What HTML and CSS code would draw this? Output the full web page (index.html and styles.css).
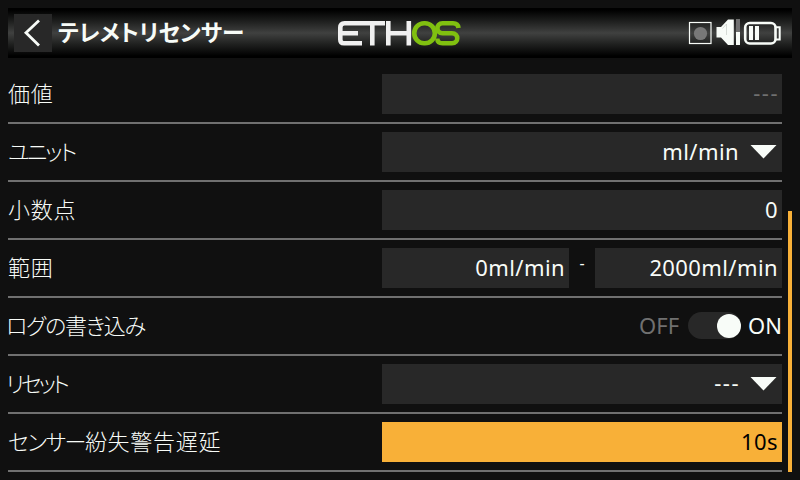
FILE: index.html
```html
<!DOCTYPE html>
<html lang="ja">
<head>
<meta charset="utf-8">
<title>テレメトリセンサー</title>
<link rel="stylesheet" href="styles.css">
</head>
<body>
<div class="screen">
  <header class="topbar">
    <button class="back" aria-label="戻る">
      <svg width="38" height="38" viewBox="0 0 38 38"><path d="M25 6.500 12 18.800 25 31.500" fill="none" stroke="#f8fcf8" stroke-width="2.800"/></svg>
    </button>
    <h1 class="title">テレメトリセンサー</h1>
    <svg class="logo" width="124" height="28" viewBox="0 0 124 28" fill="none" stroke-width="4.600">
      <g stroke="#f0f0f0">
        <path d="M25 3.300H7.500Q3.300 3.300 3.300 7.500V19.500Q3.300 23.300 7 23.300H25M3.300 13.300H21"/>
        <path d="M25 3.300H48M35.300 3.300V25.600"/>
        <path d="M51.300 1V25.600M71.800 1V25.600M51.300 13.300H71.800"/>
      </g>
      <g stroke="#80c010">
        <rect x="77.300" y="3.300" width="20.500" height="20" rx="9.800"/>
        <path d="M121.500 8Q121 3.300 116 3.300H105.500C98.800 3.300 98.800 13.300 105.500 13.300H115C122 13.300 122 23.300 115 23.300H105.500Q100.500 23.300 100.300 18.500"/>
      </g>
    </svg>
    <div class="status">
      <svg width="94" height="28" viewBox="0 0 94 28">
        <rect x="1.500" y="3.500" width="21.500" height="21" fill="none" stroke="#f8fcf8" stroke-width="1.200"/>
        <circle cx="12.500" cy="14.500" r="6.600" fill="#787878"/>
        <path d="M28.500 8H33L40 .500H45.800V26H40L33 18.500H28.500Z" fill="#f8fcf8"/>
        <path d="M34.500 9.500 38.500 5V16" fill="none" stroke="#c0c4c0" stroke-width=".6"/>
        <rect x="48" y="0" width="4" height="13" fill="#707070"/>
        <rect x="48" y="13" width="4" height="13" fill="#f8fcf8"/>
        <rect x="57.200" y="4" width="30.300" height="20.500" rx="4.500" fill="none" stroke="#f8fcf8" stroke-width="2.600"/>
        <path d="M88 8.300H91.700V20.500H88" fill="none" stroke="#f8fcf8" stroke-width="2"/>
        <path d="M61 7H65V21H61ZM67 7H71V21H67Z" fill="#f8fcf8"/>
      </svg>
    </div>
  </header>

  <main class="form">
    <div class="row"><span class="label">価値</span><div class="field muted"><span class="text empty">---</span></div></div>
    <div class="row"><span class="label unit">ユニット</span><div class="field"><span class="text">ml/min</span><i class="arrow"></i></div></div>
    <div class="row"><span class="label">小数点</span><div class="field"><span class="text">0</span></div></div>
    <div class="row"><span class="label">範囲</span>
      <div class="range"><div class="field"><span class="text">0ml/min</span></div><span class="dash">-</span><div class="field"><span class="text">2000ml/min</span></div></div>
    </div>
    <div class="row"><span class="label log">ログの書き込み</span>
      <div class="switch"><span class="text off">OFF</span><span class="track"><i class="knob"></i></span><span class="text on">ON</span></div>
    </div>
    <div class="row"><span class="label reset">リセット</span><div class="field"><span class="text empty">---</span><i class="arrow"></i></div></div>
    <div class="row"><span class="label"><span class="kana">センサー</span>紛失警告遅延</span><div class="field active"><span class="text">10s</span></div></div>
  </main>
  <div class="scrollbar"></div>
</div>
</body>
</html>
```

FILE: styles.css
```css
* { box-sizing: border-box; }

body {
  margin: 0;
  background: #101010;
  color: #f8fcf8;
  font: 22px/40px "Noto Sans", "Noto Sans CJK JP", sans-serif;
}

.screen {
  position: relative;
  width: 800px;
  height: 480px;
  padding: 8px 0 0 8px;
  overflow: hidden;
}

.topbar {
  position: relative;
  display: flex;
  align-items: center;
  height: 50px;
  width: 784px;
  padding-left: 6px;
  background: linear-gradient(#000 0, #000 4%, #202120 28%, #404140 50%, #202120 72%, #000 96%);
}

.back {
  width: 38px;
  height: 38px;
  padding: 0;
  border: 0;
  background: #282828;
}

.back svg { display: block; }

.title {
  margin: 0 0 2px 6px;
  font: 700 22.6px/38px "Noto Sans CJK JP", sans-serif;
  font-feature-settings: "palt";
  white-space: nowrap;
}

.logo {
  position: absolute;
  left: 329px;
  top: 12px;
}

.status {
  margin-left: auto;
  width: 104px;
  height: 28px;
}

.status svg { display: block; }

.form {
  width: 774px;
  padding-top: 8px;
}

.row {
  display: grid;
  grid-template-columns: 374px 400px;
  align-items: center;
  height: 58px;
  border-bottom: 2px solid #707070;
}

.label {
  padding-bottom: 4px;
  font-family: "Noto Sans CJK JP", sans-serif;
  font-weight: 300;
  font-size: 22px;
  letter-spacing: .7px;
  white-space: nowrap;
}

.unit,
.log,
.reset,
.kana { font-feature-settings: "palt"; }

.unit { letter-spacing: -2.3px; }
.log { letter-spacing: -1.2px; margin-left: -2px; }
.reset { letter-spacing: -3.2px; margin-left: -2px; }
.kana { letter-spacing: -1.5px; }

.field {
  display: flex;
  justify-content: flex-end;
  align-items: center;
  height: 40px;
  padding-right: 4px;
  background: #282828;
  letter-spacing: .4px;
}

.text { padding-bottom: 3px; }

.field .empty {
  padding-bottom: 4px;
  letter-spacing: 1.5px;
  margin-right: -1px;
}

.muted { color: #707070; }

.active {
  background: #f8b038;
  color: #000;
}

.arrow {
  width: 27px;
  height: 14px;
  margin: 0 1px 1px 11px;
  background: #f8fcf8;
  clip-path: polygon(0 0, 100% 0, 50% 100%);
}

.range {
  display: grid;
  grid-template-columns: 187px 26px 187px;
}

.dash {
  font-size: 16px;
  line-height: 30px;
  text-align: center;
}

.switch {
  display: flex;
  justify-content: flex-end;
  align-items: center;
}

.off { color: #707070; }

.track {
  display: flex;
  justify-content: flex-end;
  align-items: center;
  width: 53px;
  height: 27px;
  margin: 0 7px 1px 9px;
  border-radius: 14px;
  background: #282828;
}

.knob {
  width: 24px;
  height: 24px;
  border-radius: 50%;
  background: #f8fcf8;
}

.scrollbar {
  position: absolute;
  left: 788px;
  top: 211px;
  width: 4px;
  height: 261px;
  background: #f8b038;
}
```
